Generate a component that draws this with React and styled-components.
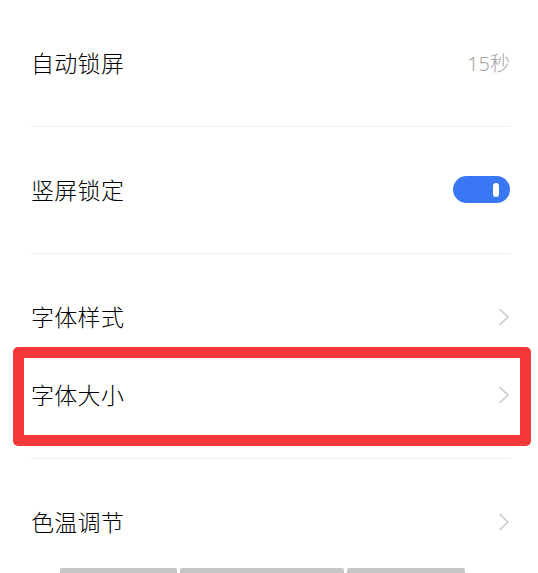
import React from 'react'
import styled, { createGlobalStyle } from 'styled-components'

const GlobalStyle = createGlobalStyle`
  html, body { margin: 0; padding: 0; background: #fff; }
  body { font-family: "Noto Sans CJK SC", "Noto Sans", sans-serif; }
`

const Page = styled.div`
  width: 538px;
  height: 573px;
  overflow: hidden;
  position: relative;
  background: #fff;
`

const Section = styled.div`
  margin: 0 28px 0 30px;
  padding: 25px 0 23px;
  border-bottom: 1px solid ${p => (p.last ? 'transparent' : '#f0f0f0')};
`

const Row = styled.div`
  position: relative;
  height: 78px;
  display: flex;
  align-items: center;
  justify-content: space-between;
`

const Label = styled.div`
  font-size: 23px;
  font-weight: 300;
  color: #000;
  letter-spacing: 0.3px;
  padding-left: 1px;
  margin-top: -4px;
`

const Value = styled.div`
  font-size: 20px;
  font-weight: 300;
  color: #a6a6a6;
  margin-top: -4px;
  font-family: "Noto Sans", "Noto Sans CJK SC", sans-serif;
`

const Toggle = styled.div`
  width: 57px;
  height: 27px;
  border-radius: 14px;
  background: #3a77f5;
  display: flex;
  align-items: center;
  justify-content: flex-end;
  padding-right: 11px;
  box-sizing: border-box;
  margin-top: -3px;
`

const Knob = styled.div`
  width: 6px;
  height: 14px;
  border-radius: 3px;
  background: #fff;
`

const Highlight = styled.div`
  position: absolute;
  left: -17px;
  right: -21px;
  top: -10px;
  bottom: -11px;
  border: 11px solid #f5383a;
  border-radius: 5px;
  pointer-events: none;
`

const Bars = styled.div`
  position: absolute;
  left: 60px;
  bottom: 0;
  display: flex;
  gap: 3px;
`

const Bar = styled.div`
  width: ${p => p.w}px;
  height: 5px;
  background: #c6c6c6;
  border-radius: 2px 2px 0 0;
`

const Arrow = styled.svg`
  margin-top: -3px;
`

const Chevron = () => (
  <Arrow width="12" height="18" viewBox="0 0 12 18" fill="none">
    <path d="M2 1.5 L10 9 L2 16.5" stroke="#c9c9c9" strokeWidth="1.6" strokeLinecap="round" strokeLinejoin="round" />
  </Arrow>
)

const App = () => (
  <Page>
    <GlobalStyle />
    <Section>
      <Row>
        <Label>自动锁屏</Label>
        <Value>15秒</Value>
      </Row>
    </Section>
    <Section>
      <Row>
        <Label>竖屏锁定</Label>
        <Toggle><Knob /></Toggle>
      </Row>
    </Section>
    <Section>
      <Row>
        <Label>字体样式</Label>
        <Chevron />
      </Row>
      <Row>
        <Label>字体大小</Label>
        <Chevron />
        <Highlight />
      </Row>
    </Section>
    <Section last>
      <Row>
        <Label>色温调节</Label>
        <Chevron />
      </Row>
    </Section>
    <Bars>
      <Bar w={117} />
      <Bar w={164} />
      <Bar w={118} />
    </Bars>
  </Page>
)

export default App
